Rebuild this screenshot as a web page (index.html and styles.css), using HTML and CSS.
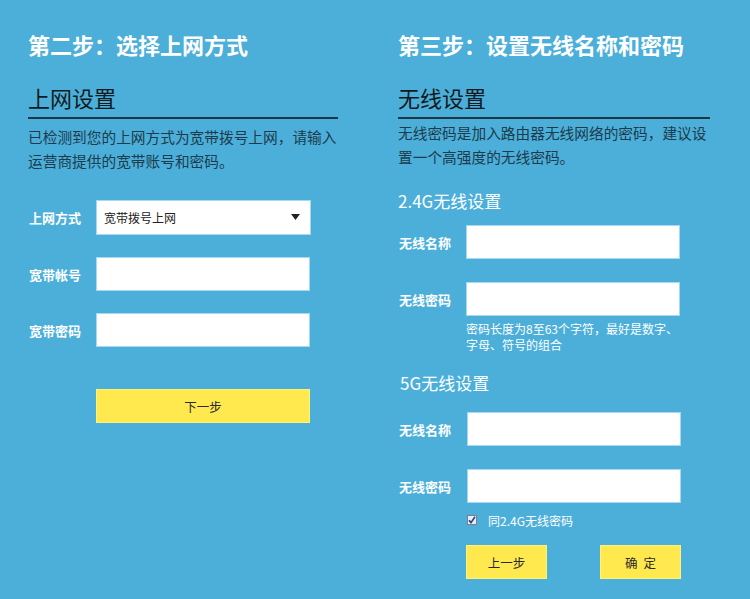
FILE: index.html
```html
<!DOCTYPE html>
<html lang="zh-CN">
<head>
<meta charset="utf-8">
<title>快速设置</title>
<link rel="stylesheet" href="styles.css">
</head>
<body>
<div class="page">
  <section class="col col-left">
    <h1 class="step-title">第二步：选择上网方式</h1>
    <h2 class="sec-title">上网设置</h2>
    <p class="desc desc-left">已检测到您的上网方式为宽带拨号上网，请输入运营商提供的宽带账号和密码。</p>
    <div class="form form-left">
      <div class="row">
        <label class="label">上网方式</label>
        <div class="select">
          <span>宽带拨号上网</span>
          <svg class="arrow" width="9" height="6" viewBox="0 0 9 6"><path d="M0 0H9L4.5 6Z" fill="#222"/></svg>
        </div>
      </div>
      <div class="row">
        <label class="label">宽带帐号</label>
        <div class="input"></div>
      </div>
      <div class="row">
        <label class="label">宽带密码</label>
        <div class="input"></div>
      </div>
      <div class="actions-left">
        <button class="btn btn-wide">下一步</button>
      </div>
    </div>
  </section>

  <section class="col col-right">
    <h1 class="step-title">第三步：设置无线名称和密码</h1>
    <h2 class="sec-title">无线设置</h2>
    <p class="desc desc-right">无线密码是加入路由器无线网络的密码，建议设置一个高强度的无线密码。</p>

    <h3 class="band-title band-24">2.4G无线设置</h3>
    <div class="row">
      <label class="label">无线名称</label>
      <div class="input"></div>
    </div>
    <div class="row row-gap">
      <label class="label">无线密码</label>
      <div class="input"></div>
    </div>
    <p class="hint">密码长度为8至63个字符，最好是数字、<br>字母、符号的组合</p>

    <h3 class="band-title band-5">5G无线设置</h3>
    <div class="band5">
      <div class="row">
        <label class="label">无线名称</label>
        <div class="input"></div>
      </div>
      <div class="row row-gap">
        <label class="label">无线密码</label>
        <div class="input"></div>
      </div>
      <div class="check-row">
        <span class="checkbox">
          <svg width="8" height="8" viewBox="0 0 8 8"><path d="M1 4.2L3 6.6L7 0.8" fill="none" stroke="#2b3f8a" stroke-width="1.6"/></svg>
        </span>
        <span class="check-text">同2.4G无线密码</span>
      </div>
      <div class="actions-right">
        <button class="btn btn-small">上一步</button>
        <button class="btn btn-small btn-spaced">确 定</button>
      </div>
    </div>
  </section>
</div>
</body>
</html>
```

FILE: styles.css
```css
* {
  box-sizing: border-box;
}

html, body {
  margin: 0;
  padding: 0;
}

body {
  background: #4bafd9;
  font-family: "Noto Sans CJK SC", "Microsoft YaHei", sans-serif;
  width: 750px;
  height: 599px;
  overflow: hidden;
}

.page {
  display: flex;
  padding-left: 28px;
  gap: 60px;
}

.col-left {
  width: 310px;
}

.col-right {
  width: 312px;
}

.step-title {
  margin: 31px 0 0;
  font-size: 22px;
  line-height: 26px;
  font-weight: 700;
  color: #ffffff;
  white-space: nowrap;
}

.sec-title {
  margin: 25px 0 0;
  font-size: 22px;
  line-height: 30px;
  font-weight: 400;
  color: #111a20;
  padding-bottom: 5px;
  border-bottom: 2px solid #1f3644;
}

.desc {
  margin: 0;
  font-size: 14.7px;
  line-height: 24px;
  color: #1d3b4c;
}

.desc-left {
  margin-top: 6px;
}

.desc-right {
  margin-top: 2px;
}

.form-left {
  margin-top: 27px;
}

.row {
  display: flex;
  align-items: center;
  height: 34px;
}

.form-left .row + .row {
  margin-top: 22px;
}

.form-left .row:first-child {
  height: 35px;
}

.label {
  width: 68px;
  flex: none;
  font-size: 13px;
  font-weight: 700;
  color: #ffffff;
  padding-left: 1px;
}

.input,
.select {
  width: 214px;
  height: 34px;
  background: #ffffff;
  border: 1px solid #a6d9f0;
}

.select {
  width: 215px;
  height: 35px;
  display: flex;
  align-items: center;
  justify-content: space-between;
  padding: 0 10px 0 7px;
  font-size: 12px;
  color: #222;
}

.arrow {
  margin-top: -2px;
}

.actions-left {
  margin-top: 42px;
  padding-left: 68px;
}

.btn {
  display: block;
  height: 34px;
  background: #ffe94f;
  border: 1px solid #fff27a;
  font-family: inherit;
  font-size: 12.5px;
  color: #2a2a2a;
  padding: 0;
  cursor: pointer;
}

.btn-wide {
  width: 214px;
}

.btn-spaced {
  word-spacing: 3px;
}

.band-title {
  margin: 0;
  font-size: 17px;
  line-height: 20px;
  font-weight: 400;
  color: #ffffff;
}

.band-24 {
  margin-top: 22px;
  margin-bottom: 14px;
}

.row-gap {
  margin-top: 23px;
}

.hint {
  margin: 5px 0 0 68px;
  font-size: 12px;
  line-height: 16px;
  color: #ffffff;
}

.band-5 {
  margin-top: 20px;
  margin-bottom: 19px;
  padding-left: 2px;
}

.band5 .label {
  width: 69px;
}

.check-row {
  display: flex;
  align-items: center;
  margin: 9px 0 0 69px;
  height: 16px;
}

.checkbox {
  width: 10px;
  height: 10px;
  border: 1px solid #7c7f92;
  background: #e9eef5;
  display: flex;
  align-items: center;
  justify-content: center;
}

.check-text {
  margin-left: 11px;
  font-size: 12px;
  color: #ffffff;
}

.actions-right {
  display: flex;
  gap: 53px;
  margin: 17px 0 0 68px;
}

.btn-small {
  width: 81px;
}
```
